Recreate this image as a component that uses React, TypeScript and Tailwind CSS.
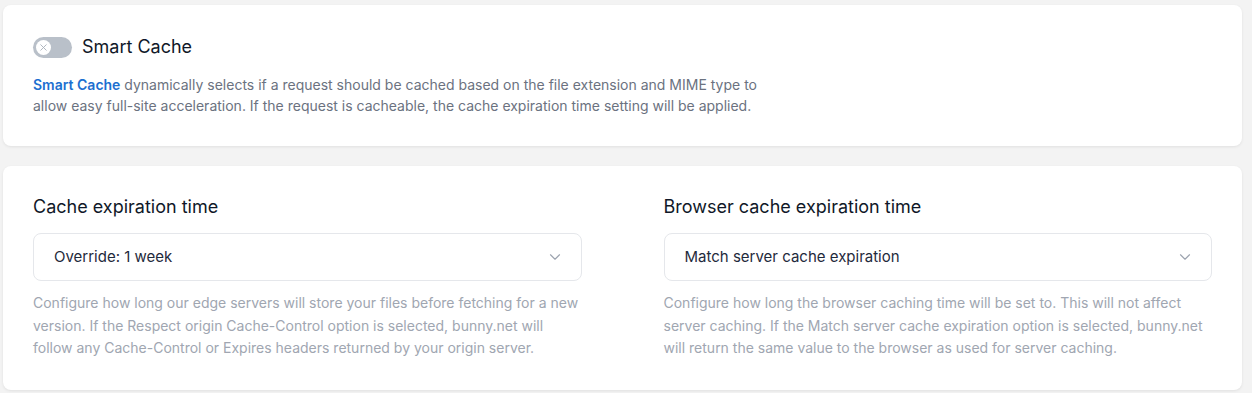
import { ChevronDown, X } from "lucide-react";

function Toggle() {
  return (
    <div className="flex h-[21px] w-[39px] items-center rounded-full bg-[#b9c0c9] px-[3px]">
      <div className="grid h-[15px] w-[15px] place-items-center rounded-full bg-white">
        <X size={11} strokeWidth={2} className="text-[#aab1bb]" />
      </div>
    </div>
  );
}

function SelectField({ label, value, help }: { label: string; value: string; help: string }) {
  return (
    <div>
      <h3 className="text-[18px] leading-[28px] text-[#101828]">{label}</h3>
      <div className="mt-[12px] flex h-[48px] items-center justify-between rounded-lg border border-[#e5e7eb] bg-white pl-[20px] pr-[17px]">
        <span className="text-[15px] text-[#1f2a3c]">{value}</span>
        <ChevronDown size={18} strokeWidth={1.5} className="text-[#9ca3af]" />
      </div>
      <p className="mt-[11px] text-[14px] leading-[22.5px] text-[#a0a6b1]">{help}</p>
    </div>
  );
}

export default function App() {
  return (
    <div className="min-h-[393px] bg-[#f3f3f3] pb-[5px] pl-[3px] pr-[10px] pt-[5px] font-['Inter',sans-serif]">
      <section className="rounded-lg bg-white px-[30px] pb-[30px] pt-[30px] shadow-[0_1px_3px_rgba(0,0,0,0.08)]">
        <div className="flex items-center gap-[10px]">
          <Toggle />
          <h2 className="text-[18px] leading-[24px] text-[#101828]">Smart Cache</h2>
        </div>
        <p className="mt-[15px] max-w-[740px] text-[14px] leading-[21px] text-[#6b7280]">
          <span className="font-semibold text-[#1c6fd0]">Smart Cache</span> dynamically selects if a request should be
          cached based on the file extension and MIME type to allow easy full-site acceleration. If the request is
          cacheable, the cache expiration time setting will be applied.
        </p>
      </section>

      <section className="mt-[20px] grid grid-cols-2 gap-x-[82px] rounded-lg bg-white px-[30px] pb-[30px] pt-[27px] shadow-[0_1px_3px_rgba(0,0,0,0.08)]">
        <SelectField
          label="Cache expiration time"
          value="Override: 1 week"
          help="Configure how long our edge servers will store your files before fetching for a new version. If the Respect origin Cache-Control option is selected, bunny.net will follow any Cache-Control or Expires headers returned by your origin server."
        />
        <SelectField
          label="Browser cache expiration time"
          value="Match server cache expiration"
          help="Configure how long the browser caching time will be set to. This will not affect server caching. If the Match server cache expiration option is selected, bunny.net will return the same value to the browser as used for server caching."
        />
      </section>
    </div>
  );
}
